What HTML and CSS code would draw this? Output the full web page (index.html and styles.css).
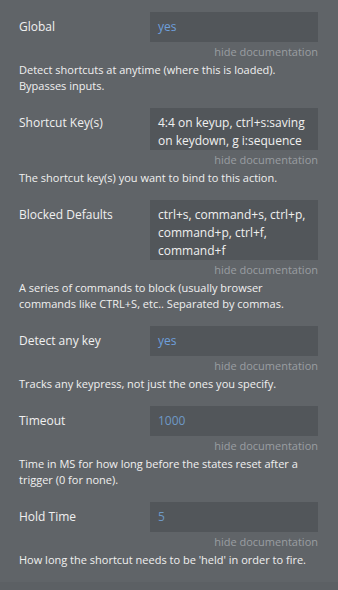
FILE: index.html
```html
<!DOCTYPE html>
<html lang="en">
<head>
    <meta charset="UTF-8">
    <meta name="viewport" content="width=device-width, initial-scale=1.0">
    <title>Shortcut properties</title>
    <link rel="stylesheet" href="styles.css">
</head>
<body>
    <div class="panel">
        <div class="prop">
            <div class="prop-row">
                <div class="label">Global</div>
                <div class="field value">yes</div>
            </div>
            <div class="hide-doc">hide documentation</div>
            <div class="desc">Detect shortcuts at anytime (where this is loaded). Bypasses inputs.</div>
        </div>

        <div class="prop">
            <div class="prop-row">
                <div class="label">Shortcut Key(s)</div>
                <div class="field text-area">4:4 on keyup, ctrl+s:saving on keydown, g i:sequence</div>
            </div>
            <div class="hide-doc">hide documentation</div>
            <div class="desc">The shortcut key(s) you want to bind to this action.</div>
        </div>

        <div class="prop">
            <div class="prop-row">
                <div class="label">Blocked Defaults</div>
                <div class="field text-area">ctrl+s, command+s, ctrl+p, command+p, ctrl+f, command+f</div>
            </div>
            <div class="hide-doc">hide documentation</div>
            <div class="desc">A series of commands to block (usually browser commands like CTRL+S, etc.. Separated by commas.</div>
        </div>

        <div class="prop">
            <div class="prop-row">
                <div class="label">Detect any key</div>
                <div class="field value">yes</div>
            </div>
            <div class="hide-doc">hide documentation</div>
            <div class="desc">Tracks any keypress, not just the ones you specify.</div>
        </div>

        <div class="prop">
            <div class="prop-row">
                <div class="label">Timeout</div>
                <div class="field number">1000</div>
            </div>
            <div class="hide-doc">hide documentation</div>
            <div class="desc">Time in MS for how long before the states reset after a trigger (0 for none).</div>
        </div>

        <div class="prop">
            <div class="prop-row">
                <div class="label">Hold Time</div>
                <div class="field number">5</div>
            </div>
            <div class="hide-doc">hide documentation</div>
            <div class="desc">How long the shortcut needs to be 'held' in order to fire.</div>
        </div>
    </div>
</body>
</html>
```

FILE: styles.css
```css
body {
    margin: 0;
    background-color: #5c6064;
    font-family: "Open Sans", Arial, sans-serif;
    color: #f0f0f0;
}
.panel {
    background-color: #606468;
    padding: 12px 20px 0 19px;
}
.prop {
    padding-bottom: 14px;
}
.prop-row {
    display: flex;
    align-items: flex-start;
}
.label {
    width: 131px;
    flex-shrink: 0;
    padding-top: 6px;
    font-size: 12px;
    line-height: 18px;
}
.field {
    flex: 1;
    background-color: #52565a;
    padding: 6px 8px;
    font-size: 12px;
    line-height: 18px;
}
.field.text-area {
    padding-bottom: 0;
    color: #f0f0f0;
}
.value {
    color: #6e9fdc;
}
.number {
    color: #6e99c6;
}
.hide-doc {
    margin-top: 3px;
    text-align: right;
    font-size: 11px;
    line-height: 14px;
    color: #9a9ea2;
}
.desc {
    margin-top: 3px;
    font-size: 11px;
    line-height: 16px;
}
```
